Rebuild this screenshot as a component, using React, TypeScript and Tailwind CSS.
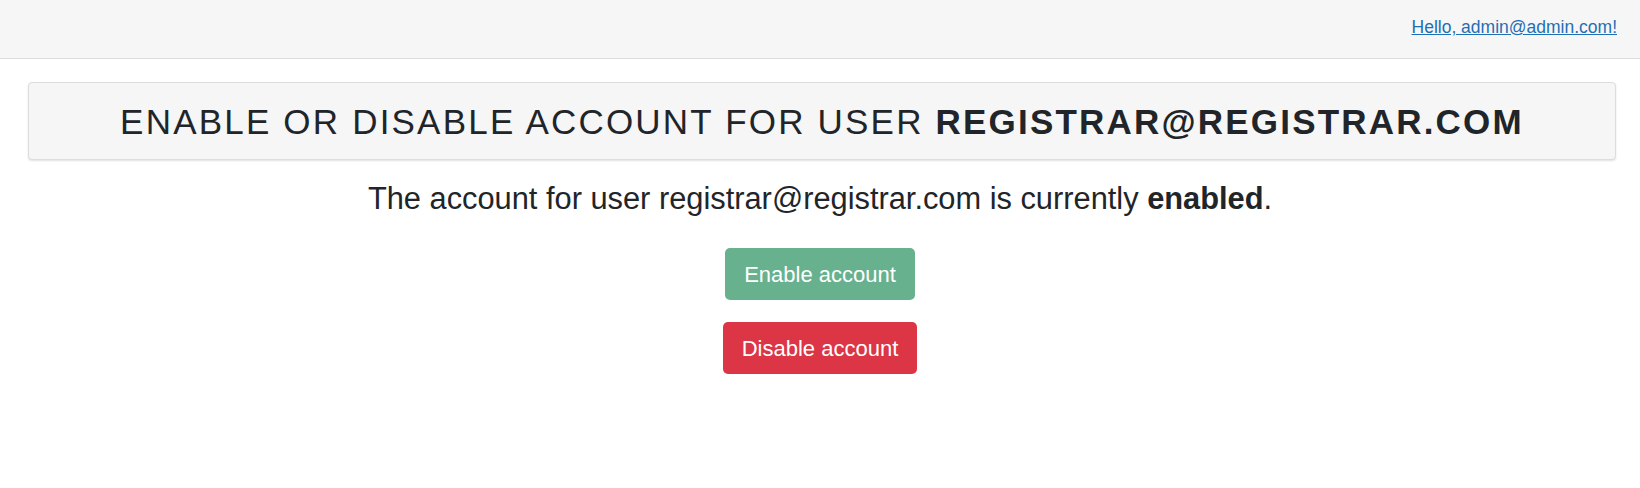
export default function App() {
  return (
    <div className="min-h-[488px] bg-white font-['Liberation_Sans',Arial,sans-serif] text-[#212529]">
      <header className="flex h-[59px] justify-end border-b border-[#dcdcdc] bg-[#f6f6f6] pr-[23px] pt-[17px]">
        <a href="#" className="text-[17.5px] leading-[20px] text-[#1f6fb5] underline">
          Hello, admin@admin.com!
        </a>
      </header>
      <main className="flex flex-col items-center">
        <div className="mt-[23px] ml-[28px] mr-[24px] flex h-[78px] items-center justify-center self-stretch rounded border border-[#dddddd] bg-[#f6f6f6] shadow-[0_1px_2px_rgba(0,0,0,0.12)]">
          <h1 className="text-[35px] uppercase leading-none tracking-[2.2px]">
            Enable or disable account for user <b>registrar@registrar.com</b>
          </h1>
        </div>
        <p className="mt-[21px] text-[30.8px] leading-[36px]">
          The account for user registrar@registrar.com is currently <b>enabled</b>.
        </p>
        <button className="mt-[31px] h-[52px] rounded-[5px] bg-[#67b18e] px-[19px] text-[22px] text-white">
          Enable account
        </button>
        <button className="mt-[22px] h-[52px] rounded-[5px] bg-[#dc3545] px-[19px] text-[22px] text-white">
          Disable account
        </button>
      </main>
    </div>
  );
}
